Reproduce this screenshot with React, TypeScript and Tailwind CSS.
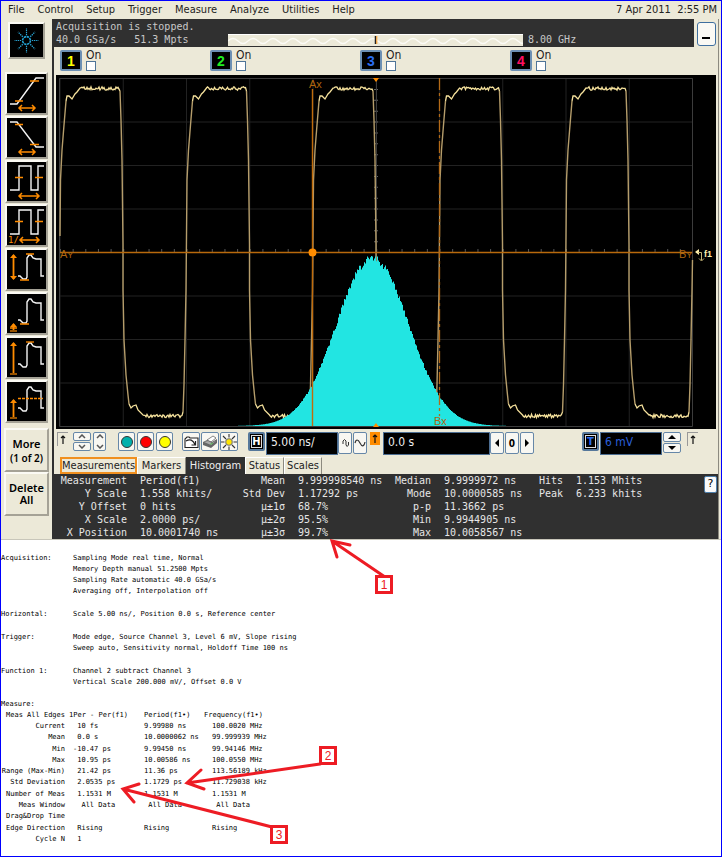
import React from "react";

const SANS = "font-['DejaVu_Sans_Condensed','DejaVu_Sans',sans-serif]";
const MONO = "font-['DejaVu_Sans_Mono',monospace]";

/* ---------- sidebar icons ---------- */

function HArrow({ x1, x2, y }: { x1: number; x2: number; y: number }) {
  return (
    <path
      d={`M${x1} ${y}H${x2}M${x1 + 3} ${y - 3}L${x1} ${y}L${x1 + 3} ${y + 3}M${x2 - 3} ${y - 3}L${x2} ${y}L${x2 - 3} ${y + 3}`}
      stroke="#ff8c00"
      strokeWidth="1.5"
    />
  );
}

function VArrow({ y1, y2, both }: { y1: number; y2: number; both?: boolean }) {
  return (
    <g>
      <path d={`M6.5 ${y1 + 1}V${y2 - 1}`} stroke="#ff8c00" strokeWidth="1.8" />
      <path d={`M3 ${y1 + 4}L6.5 ${y1}L10 ${y1 + 4}Z`} fill="#ff8c00" />
      {both ? (
        <path d={`M3 ${y2 - 4}L6.5 ${y2}L10 ${y2 - 4}Z`} fill="#ff8c00" />
      ) : (
        <path d={`M3 ${y2}H10`} stroke="#ff8c00" strokeWidth="1.2" />
      )}
    </g>
  );
}

const WHITE = "#f4f4f4";
const PULSE = "M11 26H13L16 29H19L20 27V8L22 5H24L26 8L29 9H34V26H37";
const SQUARE = "M3 28H12V4H24V28H31V4H37";

function Ticks({ d }: { d: string }) {
  return <path d={d} stroke="#ff8c00" strokeWidth="1.3" />;
}

const SIDE_ICONS: { name: string; art: React.ReactNode }[] = [
  {
    name: "Rise time",
    art: (
      <>
        <path d="M3 30H10L29 4H37" stroke={WHITE} strokeWidth="1.4" />
        <Ticks d="M8 27H16M23 7H32" />
        <HArrow x1={12} x2={28} y={34} />
      </>
    ),
  },
  {
    name: "Fall time",
    art: (
      <>
        <path d="M3 4H10L29 29H37" stroke={WHITE} strokeWidth="1.4" />
        <Ticks d="M8 6.5H16M23 26.5H32" />
        <HArrow x1={12} x2={28} y={34} />
      </>
    ),
  },
  {
    name: "Period",
    art: (
      <>
        <path d={SQUARE} stroke={WHITE} strokeWidth="1.4" />
        <Ticks d="M8 15.5H16M28 15.5H36" />
        <HArrow x1={12} x2={32} y={34} />
      </>
    ),
  },
  {
    name: "Frequency",
    art: (
      <>
        <path d={SQUARE} stroke={WHITE} strokeWidth="1.4" />
        <Ticks d="M8 15.5H16M28 15.5H36" />
        <HArrow x1={13} x2={32} y={34} />
        <text x="1" y="37" fontSize="9" fill="#ff8c00" fontFamily="DejaVu Sans Mono">
          1/
        </text>
      </>
    ),
  },
  {
    name: "V peak-to-peak",
    art: (
      <>
        <path d={PULSE} stroke={WHITE} strokeWidth="1.4" />
        <Ticks d="M19 4H27M13 30H22" />
        <VArrow y1={4} y2={30} both />
      </>
    ),
  },
  {
    name: "V min",
    art: (
      <>
        <path d={PULSE} stroke={WHITE} strokeWidth="1.4" />
        <Ticks d="M13 30H22M3 34H10" />
        <VArrow y1={29} y2={37} />
      </>
    ),
  },
  {
    name: "V max",
    art: (
      <>
        <path d={PULSE} stroke={WHITE} strokeWidth="1.4" />
        <Ticks d="M19 4H27" />
        <VArrow y1={4} y2={36} />
      </>
    ),
  },
  {
    name: "V average",
    art: (
      <>
        <path d={PULSE} stroke={WHITE} strokeWidth="1.4" />
        <path d="M11 16.5H36" stroke="#ff8c00" strokeWidth="1.4" strokeDasharray="3 1" />
        <VArrow y1={17} y2={36} />
      </>
    ),
  },
];

function Starburst() {
  const rays = [0, 45, 90, 135, 180, 225, 270, 315];
  return (
    <svg viewBox="0 0 34 34" className="h-full w-full" fill="none" aria-hidden="true">
      <circle cx="17" cy="17" r="4" stroke="#22a8dc" strokeWidth="1.6" strokeDasharray="2.4 0.7" />
      {rays.map((a) => (
        <path
          key={a}
          d="M17 11.5V4.500"
          transform={`rotate(${a} 17 17)`}
          stroke="#2aa5d5"
          strokeWidth="1.2"
          strokeDasharray="1.4 0.8"
        />
      ))}
    </svg>
  );
}

function Sidebar() {
  const bevel = "border-2 border-t-[#fbfaf4] border-l-[#fbfaf4] border-r-[#a5a296] border-b-[#a5a296]";
  return (
    <aside className="flex w-[51px] shrink-0 flex-col items-center bg-[#ece9d8] pt-[3px]">
      <button aria-label="Instrument logo" className={`mb-[13px] h-[37px] w-[37px] bg-black ${bevel}`}>
        <Starburst />
      </button>
      {SIDE_ICONS.map((i) => (
        <button key={i.name} aria-label={i.name} className={`mb-px h-[43px] w-[43px] bg-black ${bevel}`}>
          <svg viewBox="0 0 39 39" className="h-full w-full" fill="none">
            {i.art}
          </svg>
        </button>
      ))}
      <button className={`mt-1 h-11 w-[45px] bg-[#ece9d8] pt-[2px] font-['Noto_Sans',sans-serif] leading-[14px] font-semibold text-black ${bevel}`}>
        <span className="block text-[11px]">More</span>
        <span className="block text-[10px]">(1 of 2)</span>
      </button>
      <button className={`h-11 w-[45px] bg-[#ece9d8] font-['Noto_Sans',sans-serif] text-[11px] leading-[12px] font-semibold text-black ${bevel}`}>
        Delete All
      </button>
    </aside>
  );
}

/* ---------- waveform display ---------- */

const noise = (n: number) => {
  const s = Math.sin(n * 127.1 + 3.7) * 43758.5453;
  return s - Math.floor(s);
};

function flat(from: number, to: number, y: number) {
  let d = "";
  for (let x = from; x <= to; x += 1) d += `L${x} ${(y + noise(x) * 3.4 - 1.7).toFixed(1)}`;
  return d;
}

function histogramPath() {
  let d = "M236 426";
  for (let x = 236; x < 506; x++) {
    const g = Math.exp(-((x - 372) ** 2) / (2 * 36 * 36));
    const h = 168 * g * (1 + (noise(x) - 0.5) * 0.05);
    d += `L${x} ${(426 - h).toFixed(1)}H${x + 1}`;
  }
  return d + "L506 426Z";
}

function Display() {
  const cols = Array.from({ length: 11 }, (_, i) => 60 + i * 63.25);
  const rows = Array.from({ length: 9 }, (_, i) => 78.5 + i * 43.5);
  const steep: string[] = [];
  const bright: string[] = [];
  for (let k = 0; k < 5; k++) {
    const r = 60 + k * 126.5;
    const f = r + 63;
    steep.push(`M${r} 236L${r + 0.5} 180L${r + 2} 150L${r + 4} 125L${r + 6} 101`);
    bright.push(`M${r + 6} 101L${r + 7} 96H${r + 9}L${r + 12} 99L${r + 15} 94L${r + 17} 92L${r + 20} 88${flat(r + 21, r + 59, 88.5)}L${r + 60} 91`);
    steep.push(`M${r + 60} 91L${r + 61} 120L${r + 62} 160L${f} 245V290L${f + 1} 340L${f + 3} 375L${f + 5} 395L${f + 6} 404`);
    bright.push(`M${f + 6} 404L${f + 8} 408L${f + 10} 406L${f + 13} 405L${f + 15} 410L${f + 20} 415${flat(f + 21, f + 59, 416)}L${f + 60} 412`);
    steep.push(`M${f + 60} 412L${f + 61} 385L${f + 62} 340L${f + 63} 290L${f + 63.5} ${k === 4 ? 260 : 236}`);
  }
  const label = { fontSize: 11, fontFamily: "Liberation Sans, sans-serif", fill: "#b0660f" };
  return (
    <svg viewBox="56 75 660 354" className="block h-auto w-full bg-black" fill="none" role="img" aria-label="Waveform and histogram">
      <g stroke="#222222" strokeWidth="1">
        {cols.map((x) => (
          <path key={x} d={`M${x} 78V426`} />
        ))}
        {rows.map((y) => (
          <path key={y} d={`M60 ${y}H692`} />
        ))}
      </g>
      <path d="M59.500 78.500H692.500V426.500H59.500Z" stroke="#3c3c3c" />
      <path d="M376 78V426" stroke="#666" strokeDasharray="1 9.875" strokeWidth="4" />
      <path d="M60 251H692" stroke="#555" strokeDasharray="1 11.65" strokeWidth="4" />
      <path d="M376.500 78V426" stroke="#3c3c3c" />
      <path d={steep.join("")} stroke="#b59d6b" strokeWidth="1.4" />
      <path d={bright.join("")} stroke="#f5e19c" strokeWidth="1.3" />
      <path d={histogramPath()} fill="#22e5e2" />
      <path d="M60 252.500H692" stroke="#b8690c" strokeWidth="1.3" />
      <path d="M312.500 89V426" stroke="#c06c0c" strokeWidth="1.4" />
      <path d="M439.500 78V416" stroke="#b36a18" strokeWidth="1.3" strokeDasharray="12 3 3 3" />
      <circle cx="312.500" cy="252.500" r="4" fill="#ff8c00" />
      <path d="M373 78H379L376 82ZM373 427H379L376 423Z" fill="#ff8c00" />
      <text x="309" y="88" {...label}>Ax</text>
      <text x="60" y="258" {...label}>A<tspan fontSize="9">Y</tspan></text>
      <text x="434" y="425" {...label}>Bx</text>
      <text x="679" y="258" {...label}>B<tspan fontSize="9">Y</tspan></text>
      <path d="M695 252L699 249V255Z" fill="#fff0ae" />
      <path d="M698 252.500H701.500V260M699 258.500L701.500 261L704 258.500" stroke="#c8b878" />
      <text x="704" y="257" fontSize="9" fontWeight="bold" fill="#fff0ae" fontFamily="Liberation Sans">f1</text>
    </svg>
  );
}

/* ---------- bars above and below the display ---------- */

function StatusBar() {
  return (
    <div className={`flex h-7 bg-[#303030] text-[10px] leading-[13px] text-[#c8c8c8] ${MONO}`}>
      <div className="w-[174px] shrink-0 whitespace-pre pt-px pl-[2px]">
        <p>Acquisition is stopped.</p>
        <p>{"40.0 GSa/s   51.3 Mpts"}</p>
      </div>
      <div className="mt-[15px] h-3 min-w-0 flex-1 bg-[#ece9d8]">
        <svg viewBox="0 0 295 12" preserveAspectRatio="none" className="h-full w-full" fill="none" aria-hidden="true">
          <path
            d={"M0 7" + Array.from({ length: 15 }, () => "q5 -5 10 0t10 0").join("")}
            stroke="#fcfbf6"
            strokeWidth="1.2"
          />
          <path d="M0 .5H295" stroke="#fff" />
          <path d="M147.500 2V10" stroke="#222" strokeWidth="1.5" />
          <path d="M148.800 2V10" stroke="#ff9a20" />
        </svg>
      </div>
      <p className="mt-[14px] ml-[5px] w-[166px] shrink-0">8.00 GHz</p>
      <div className="flex w-[24px] shrink-0 justify-center bg-[#ece9d8] pt-[3px]">
        <button
          aria-label="Minimize"
          className="flex h-6 w-[19px] items-end justify-center rounded-[3px] border border-[#3f6f9f] bg-[#faf9f4] pb-[6px]"
        >
          <span className="h-[2px] w-2 bg-black" />
        </button>
      </div>
    </div>
  );
}

const CHANNELS = [
  { n: 1, color: "text-[#ffff00]" },
  { n: 2, color: "text-[#22ee22]" },
  { n: 3, color: "text-[#2a6df0]" },
  { n: 4, color: "text-[#ff1060]" },
];

function ChannelBar() {
  return (
    <div className="flex h-7 bg-[#ece9d8] pt-[2px] pl-1">
      {CHANNELS.map((c) => (
        <div key={c.n} className="flex max-w-[150px] flex-1 gap-1 pt-px">
          <button
            className={`h-[21px] w-[22px] rounded-[2px] border-2 border-[#6d90b4] bg-black font-['Liberation_Sans',sans-serif] text-[14px] leading-[16px] font-semibold ${c.color}`}
          >
            {c.n}
          </button>
          <label className={`flex flex-col text-[12px] leading-[10px] text-[#222] ${SANS}`}>
            On
            <input type="checkbox" className="mt-px h-[10px] w-[10px] appearance-none border border-[#4f7598] bg-white" />
          </label>
        </div>
      ))}
    </div>
  );
}

const BTN = "flex shrink-0 items-center justify-center rounded-[2px] border border-[#6687a8] bg-[#f8f7f2]";

function Chevron({ up }: { up?: boolean }) {
  return (
    <svg viewBox="0 0 8 5" className="h-[5px] w-2" fill="none" stroke="#555" strokeWidth="1.5" aria-hidden="true">
      <path d={up ? "M1 4L4 1L7 4" : "M1 1L4 4L7 1"} />
    </svg>
  );
}

function Triangle({ d }: { d: string }) {
  return (
    <svg viewBox="0 0 8 8" className="h-2 w-2" aria-hidden="true">
      <path d={d} fill="#000" />
    </svg>
  );
}

function UpArrow() {
  return (
    <svg viewBox="0 0 8 10" className="h-[10px] w-2" fill="none" stroke="#111" aria-hidden="true">
      <path d="M4 9V1M2 3L4 1L6 3" strokeWidth="1.2" />
    </svg>
  );
}

const DOTS = [
  { name: "Run", fill: "bg-[#00b0ac]" },
  { name: "Stop", fill: "bg-[#ff0000]" },
  { name: "Single", fill: "bg-[#ffff00]" },
];

function ControlBar() {
  const field = "h-[23px] border border-[#4d6e92] bg-black px-1 pb-1 text-[12px] leading-[16px] outline-none";
  return (
    <div className={`flex h-[28px] items-start overflow-hidden bg-[#ece9d8] pt-[3px] ${SANS}`}>
      <button aria-label="Reference" className="ml-px flex h-[14px] w-[11px] shrink-0 items-center justify-center border-t border-l border-[#999]">
        <UpArrow />
      </button>
      <div className="ml-[5px] flex shrink-0 flex-col gap-px">
        <button aria-label="Scale up" className={`h-[9px] w-[18px] ${BTN}`}><Chevron up /></button>
        <button aria-label="Scale down" className={`h-[9px] w-[18px] ${BTN}`}><Chevron /></button>
      </div>
      <button aria-label="Offset" className={`ml-[2px] h-[19px] w-[13px] flex-col gap-[5px] ${BTN}`}>
        <Chevron up />
        <Chevron />
      </button>
      <div className="ml-[12px] flex gap-[2px]">
        {DOTS.map((d) => (
          <button key={d.name} aria-label={d.name} className={`h-[19px] w-[17px] ${BTN}`}>
            <span className={`h-3 w-3 rounded-full border border-[#333] ${d.fill}`} />
          </button>
        ))}
      </div>
      <div className="ml-[9px] flex gap-px">
        <button aria-label="Copy screen" className={`h-[19px] w-[18px] ${BTN}`}>
          <svg viewBox="0 0 15 14" className="h-[14px] w-[15px]" fill="none" stroke="#222">
            <path d="M3 2H5L6 3H14V12.500H1V4Z" strokeWidth="1.1" fill="#fff" />
            <path d="M2 6C6 3.500 9 5 11 9.500M11.500 6V10H7.500" strokeWidth="1.2" />
          </svg>
        </button>
        <button aria-label="Print" className={`h-[19px] w-[18px] ${BTN}`}>
          <svg viewBox="0 0 15 14" className="h-[14px] w-[15px]">
            <path d="M4 5L10 1L13 3L8 7Z" fill="#fff" stroke="#555" strokeWidth="0.7" />
            <path d="M0 7L4 5L9 7L14 4V8L8 13L0 10Z" fill="#666" />
            <path d="M1 7L5 6L9 8L14 5L8 10Z" fill="#a8a8a8" />
            <path d="M7 9.500L10 8" stroke="#50b850" />
          </svg>
        </button>
        <button aria-label="Brightness" className={`h-[19px] w-[18px] ${BTN}`}>
          <svg viewBox="0 0 16 16" className="h-4 w-4" stroke="#333" strokeWidth="1.1">
            <path d="M8 0V3.500M8 12.500V16M0 8H3.500M12.500 8H16M2 2L5 5M11 11L14 14M14 2L11 5M5 11L2 14" />
            <circle cx="8" cy="8" r="3.200" fill="#ffe600" stroke="#777" />
          </svg>
        </button>
      </div>
      <button aria-label="Horizontal" className="ml-[10px] flex h-[19px] w-[17px] shrink-0 items-center justify-center rounded-[2px] border-2 border-[#56789b] bg-black">
        <span className="flex h-[13px] w-[11px] items-center justify-center border border-[#ddd] text-[11px] leading-none font-semibold text-white">H</span>
      </button>
      <input aria-label="Time per division" defaultValue="5.00 ns/" className={`ml-px w-[72px] shrink-0 text-[#eee] ${field}`} />
      <button aria-label="Zoom in time" className={`h-[22px] w-[14px] ${BTN}`}>
        <svg viewBox="0 0 9 10" className="h-[10px] w-[9px]" fill="none" stroke="#333">
          <path d="M2 6V3Q3.500 0 5 3V7Q6 10 7.500 7V4" />
        </svg>
      </button>
      <button aria-label="Zoom out time" className={`ml-px h-[22px] w-[14px] ${BTN}`}>
        <svg viewBox="0 0 12 8" className="h-2 w-3" fill="none" stroke="#333">
          <path d="M1 4C2 0 4 0 6 4S10 8 11 3" strokeWidth="1.2" />
        </svg>
      </button>
      <button aria-label="Delay reference" className="ml-[3px] flex h-[13px] w-[10px] shrink-0 items-center justify-center bg-[#ff8c00]">
        <UpArrow />
      </button>
      <input aria-label="Delay" defaultValue="0.0 s" className={`ml-[3px] w-[107px] min-w-0 text-[#eee] ${field}`} />
      <div className="flex gap-px">
        <button aria-label="Delay left" className={`h-[22px] w-[14px] ${BTN}`}><Triangle d="M6 0V8L2 4Z" /></button>
        <button className={`h-[22px] w-[14px] text-[10px] font-bold ${BTN}`}>0</button>
        <button aria-label="Delay right" className={`h-[22px] w-[14px] ${BTN}`}><Triangle d="M2 0V8L6 4Z" /></button>
      </div>
      <button aria-label="Trigger level" className="ml-auto flex h-[19px] w-[17px] shrink-0 items-center justify-center rounded-[2px] border-2 border-[#56789b] bg-black">
        <span className="flex h-[13px] w-[11px] items-center justify-center border border-[#ddd] text-[11px] leading-none font-semibold text-[#2a6df0]">T</span>
      </button>
      <input aria-label="Level" defaultValue="6 mV" className={`ml-px w-[62px] shrink-0 text-[#2a5fd8] ${field}`} />
      <div className="ml-px flex shrink-0 flex-col gap-px">
        <button aria-label="Level up" className={`h-[10px] w-[18px] ${BTN}`}><Triangle d="M0 6L4 2L8 6Z" /></button>
        <button aria-label="Level down" className={`h-[10px] w-[18px] ${BTN}`}><Triangle d="M0 2L4 6L8 2Z" /></button>
      </div>
      <button aria-label="Slope" className="mr-[20px] ml-[6px] flex h-[14px] w-[11px] shrink-0 items-center justify-center border-t border-l border-[#999]">
        <UpArrow />
      </button>
    </div>
  );
}

function Tabs() {
  const tab = "h-[17px] shrink-0 text-center leading-[14px]";
  const plain = "border-t border-l border-t-white border-l-white border-r border-r-[#8c8a80]";
  return (
    <div role="tablist" className={`flex h-[17px] bg-[#ece9d8] pl-1 text-[11px] text-[#222] ${SANS}`}>
      <button role="tab" className={`w-[77px] border-2 border-[#f09020] ${tab}`}>Measurements</button>
      <button role="tab" className={`w-[49px] ${plain} ${tab}`}>Markers</button>
      <button role="tab" aria-selected="true" className={`w-[59px] bg-[#303030] pt-px text-[#eee] ${tab}`}>Histogram</button>
      <button role="tab" className={`w-[39px] ${plain} ${tab}`}>Status</button>
      <button role="tab" className={`w-[38px] ${plain} ${tab}`}>Scales</button>
    </div>
  );
}

const RESULTS = [
  ["Measurement", "Period(f1)", "Mean", "9.999998540 ns", "Median", "9.9999972 ns", "Hits", "1.153 Mhits"],
  ["Y Scale", "1.558 khits/", "Std Dev", "1.17292 ps", "Mode", "10.0000585 ns", "Peak", "6.233 khits"],
  ["Y Offset", "0 hits", "µ±1σ", "68.7%", "p-p", "11.3662 ps", "", ""],
  ["X Scale", "2.0000 ps/", "µ±2σ", "95.5%", "Min", "9.9944905 ns", "", ""],
  ["X Position", "10.0001740 ns", "µ±3σ", "99.7%", "Max", "10.0058567 ns", "", ""],
];

function Results() {
  return (
    <div className="flex justify-between bg-[#303030]">
      <table className={`table-fixed border-collapse text-[10px] leading-[13px] whitespace-pre text-[#e6e6e6] ${MONO}`}>
        <colgroup>
          <col className="w-[71px]" />
          <col className="w-[104px]" />
          <col className="w-[54px]" />
          <col className="w-[104px]" />
          <col className="w-[42px]" />
          <col className="w-[95px]" />
          <col className="w-[37px]" />
          <col className="w-[84px]" />
        </colgroup>
        <tbody>
          {RESULTS.map((row) => (
            <tr key={row[0]}>
              {row.map((cell, i) => (
                <td key={i} className={i % 2 ? "p-0 pl-[13px]" : "p-0 text-right"}>
                  {cell}
                </td>
              ))}
            </tr>
          ))}
        </tbody>
      </table>
      <button className="mt-[2px] mr-px flex h-[17px] w-[13px] items-center justify-center rounded-[2px] border border-[#4d7eaa] bg-[#fafafa] font-['DejaVu_Sans',sans-serif] text-[11px]">
        ?
      </button>
    </div>
  );
}

const MENUS = ["File", "Control", "Setup", "Trigger", "Measure", "Analyze", "Utilities", "Help"];

function Scope() {
  return (
    <section className="border-b border-[#c8c6ba] bg-[#ece9d8]">
      <nav className={`flex h-[18px] items-center gap-[13px] pr-1 pl-[7px] text-[11px] text-[#222] ${SANS}`}>
        {MENUS.map((m) => (
          <button key={m}>{m}</button>
        ))}
        <span className="ml-auto whitespace-pre">{"7 Apr 2011  2:55 PM"}</span>
      </nav>
      <div className="flex">
        <Sidebar />
        <div className="mr-[2px] min-w-0 flex-1 border-r border-l-2 border-r-[#8c8a80] border-l-[#303030]">
          <StatusBar />
          <div className="pl-[2px]">
            <ChannelBar />
            <div className="pr-[2px]">
              <Display />
            </div>
            <ControlBar />
            <Tabs />
          </div>
          <div className="bg-[#303030] pl-[2px]">
            <Results />
          </div>
        </div>
      </div>
    </section>
  );
}

/* ---------- printed report ---------- */

const SETTINGS = [
  {
    title: "Acquisition:",
    lines: [
      "Sampling Mode real time, Normal",
      "Memory Depth manual 51.2500 Mpts",
      "Sampling Rate automatic 40.0 GSa/s",
      "Averaging off, Interpolation off",
    ],
  },
  { title: "Horizontal:", lines: ["Scale 5.00 ns/, Position 0.0 s, Reference center"] },
  {
    title: "Trigger:",
    lines: [
      "Mode edge, Source Channel 3, Level 6 mV, Slope rising",
      "Sweep auto, Sensitivity normal, Holdoff Time 100 ns",
    ],
  },
  { title: "Function 1:", lines: ["Channel 2 subtract Channel 3", "Vertical Scale 200.000 mV/, Offset 0.0 V"] },
];

const MEASURES = [
  ["Current", " 10 fs", "9.99980 ns", "100.0020 MHz"],
  ["Mean", " 0.0 s", "10.0000062 ns", "99.999939 MHz"],
  ["Min", "-10.47 ps", "9.99450 ns", "99.94146 MHz"],
  ["Max", " 10.95 ps", "10.00586 ns", "100.0550 MHz"],
  ["Range (Max-Min)", " 21.42 ps", "11.36 ps", "113.56189 kHz"],
  ["Std Deviation", " 2.0535 ps", "1.1729 ps", "11.729038 kHz"],
  ["Number of Meas", " 1.1531 M", "1.1531 M", "1.1531 M"],
  ["Meas Window", "  All Data", " All Data", " All Data"],
  ["Drag&Drop Time", "", "", ""],
  ["Edge Direction", " Rising", "Rising", "Rising"],
  ["Cycle N", " 1", "", ""],
];

function Report() {
  return (
    <section className={`pt-[13px] pb-[11px] text-[7px] leading-[11px] text-black ${MONO}`}>
      <dl className="flex flex-col gap-3">
        {SETTINGS.map((s) => (
          <div key={s.title} className="flex">
            <dt className="w-[72px] shrink-0">{s.title}</dt>
            <dd>
              {s.lines.map((l) => (
                <p key={l}>{l}</p>
              ))}
            </dd>
          </div>
        ))}
      </dl>
      <h2 className="mt-[11px]">Measure:</h2>
      <table className="h-[135px] table-fixed border-collapse whitespace-pre">
        <colgroup>
          <col className="w-[64px]" />
          <col className="w-[79px]" />
          <col className="w-[60px]" />
          <col className="w-[84px]" />
        </colgroup>
        <thead>
          <tr>
            <th scope="col" className="p-0 text-right font-normal">Meas All Edges</th>
            <th scope="col" className="p-0 pl-1 text-left font-normal">1Per - Per(f1)</th>
            <th scope="col" className="p-0 text-left font-normal">Period(f1•)</th>
            <th scope="col" className="p-0 text-left font-normal">Frequency(f1•)</th>
          </tr>
        </thead>
        <tbody>
          {MEASURES.map((r) => (
            <tr key={r[0]}>
              <th scope="row" className="p-0 text-right font-normal">{r[0]}</th>
              <td className="p-0 pl-2">{r[1]}</td>
              <td className="p-0">{r[2]}</td>
              <td className="p-0 pl-2">{r[3]}</td>
            </tr>
          ))}
        </tbody>
      </table>
    </section>
  );
}

/* ---------- red call-outs drawn over the page ---------- */

const CALLOUTS = [
  { n: 1, place: "left-[374px] top-[574px]", d: "M384 576L331 540M349 544L331 540L336 556" },
  { n: 2, place: "left-[318px] top-[745px]", d: "M319 763L186 782M200 769L186 782L203 788" },
  { n: 3, place: "left-[269px] top-[824px]", d: "M271 826L122 788M138 783L122 788L133 801" },
];

function Callouts() {
  return (
    <div className="pointer-events-none absolute inset-0">
      <svg className="absolute top-0 left-0 h-[856px] w-[720px]" fill="none" stroke="#ed1c24" strokeWidth="3" strokeLinecap="round" aria-hidden="true">
        {CALLOUTS.map((c) => (
          <path key={c.n} d={c.d} />
        ))}
      </svg>
      {CALLOUTS.map((c) => (
        <span
          key={c.n}
          className={`absolute flex h-[19px] w-[18px] items-center justify-center border-3 border-[#ed1c24] bg-white font-['Liberation_Sans',sans-serif] text-[12px] text-[#ed1c24] ${c.place}`}
        >
          {c.n}
        </span>
      ))}
    </div>
  );
}

export default function App() {
  return (
    <main className="relative border border-[#0000ff] bg-white">
      <Scope />
      <Report />
      <Callouts />
    </main>
  );
}
